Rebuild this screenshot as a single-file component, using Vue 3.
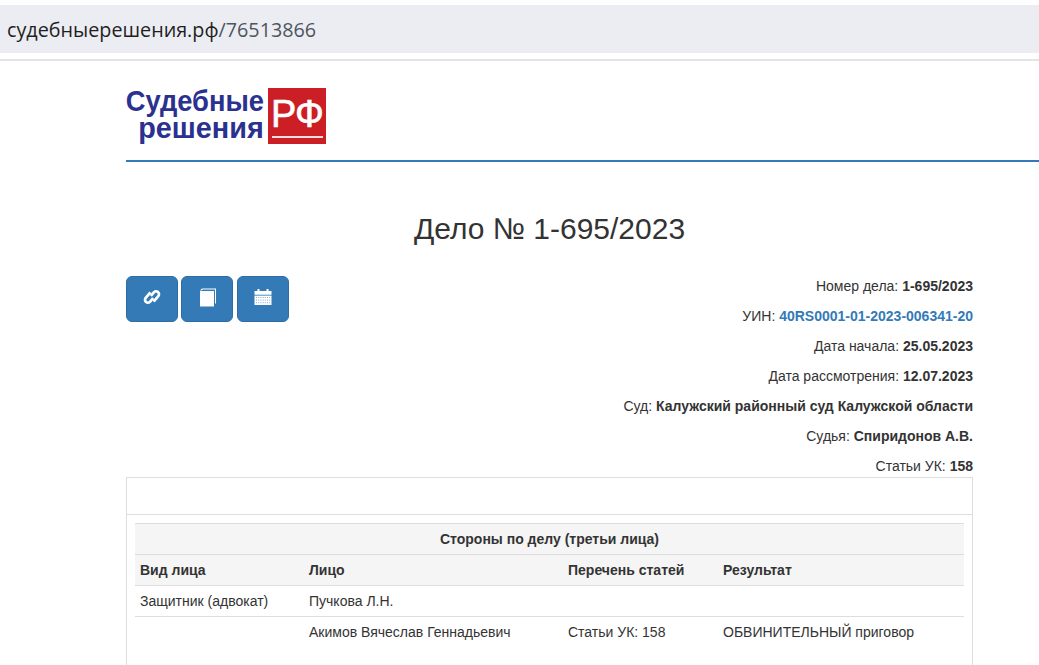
<template>
  <div class="page">
    <div class="address-bar">
      <span class="host">судебныерешения.рф</span><span class="path">/76513866</span>
    </div>
    <div class="bar-line"></div>

    <main class="content">
      <header class="site-header">
        <a href="#" class="logo" title="Судебные решения">
          <span class="logo-text">
            <span class="logo-top">Судебные</span>
            <span class="logo-bottom">решения</span>
          </span>
          <span class="logo-mark">
            <span class="logo-letters">РФ</span>
            <span class="logo-rule"></span>
          </span>
        </a>
      </header>

      <div class="wrap">
        <h1 class="title">Дело № 1-695/2023</h1>

        <div class="summary">
          <div class="actions">
            <button class="btn" type="button" aria-label="Ссылка">
              <svg width="20" height="20" viewBox="0 0 20 20">
                <g transform="rotate(-50 10 10)" fill="none" stroke="#fff" stroke-width="2.7">
                  <path d="M12.5 5.8 H5.2 a2.9 2.9 0 0 0 0 5.8 H10" />
                  <path d="M10 8.4 H14.8 a2.9 2.9 0 0 1 0 5.8 H7.5" />
                </g>
              </svg>
            </button>
            <button class="btn" type="button" aria-label="Документы">
              <svg class="book" width="18" height="19" viewBox="0 0 18 19">
                <path d="M1 2.5 L3 0.5 H17 V15.5 H16 V1.5 H3.5 L2.5 2.5 Z" fill="#fff" />
                <path d="M1 3 H15 V18.5 H1 Z" fill="#fff" />
              </svg>
            </button>
            <button class="btn" type="button" aria-label="Календарь">
              <svg width="18" height="18" viewBox="0 0 18 18">
                <path d="M0.5 3 H3.5 V1 H5.5 V3 H12.5 V1 H14.5 V3 H17.5 V6.8 H0.5 Z" fill="#fff" />
                <rect x="0.5" y="7.6" width="17" height="9.4" fill="#fff" />
                <g fill="#8aa9d0">
                  <rect v-for="dot in dots" :key="dot.id" :x="dot.x" :y="dot.y" width="1" height="1" />
                </g>
              </svg>
            </button>
          </div>

          <div class="info">
            <div v-for="row in info" :key="row.label" class="info-row">
              {{ row.label }}: <a v-if="row.link" href="#" class="info-link">{{ row.value }}</a
              ><b v-else>{{ row.value }}</b>
            </div>
          </div>
        </div>

        <section class="panel">
          <div class="panel-heading"></div>
          <div class="panel-body">
            <table class="parties">
              <colgroup>
                <col class="col-kind" />
                <col class="col-person" />
                <col class="col-articles" />
                <col />
              </colgroup>
              <thead>
                <tr>
                  <th colspan="4" class="caption">Стороны по делу (третьи лица)</th>
                </tr>
                <tr>
                  <th>Вид лица</th>
                  <th>Лицо</th>
                  <th>Перечень статей</th>
                  <th>Результат</th>
                </tr>
              </thead>
              <tbody>
                <tr v-for="party in parties" :key="party.person">
                  <td>{{ party.kind }}</td>
                  <td>{{ party.person }}</td>
                  <td>{{ party.articles }}</td>
                  <td>{{ party.result }}</td>
                </tr>
              </tbody>
            </table>
          </div>
        </section>
      </div>
    </main>
  </div>
</template>

<script setup>
const info = [
  { label: "Номер дела", value: "1-695/2023" },
  { label: "УИН", value: "40RS0001-01-2023-006341-20", link: true },
  { label: "Дата начала", value: "25.05.2023" },
  { label: "Дата рассмотрения", value: "12.07.2023" },
  { label: "Суд", value: "Калужский районный суд Калужской области" },
  { label: "Судья", value: "Спиридонов А.В." },
  { label: "Статьи УК", value: "158" },
];

const parties = [
  { kind: "Защитник (адвокат)", person: "Пучкова Л.Н.", articles: "", result: "" },
  {
    kind: "",
    person: "Акимов Вячеслав Геннадьевич",
    articles: "Статьи УК: 158",
    result: "ОБВИНИТЕЛЬНЫЙ приговор",
  },
];

// calendar grid dots
const dots = [];
for (let r = 0; r < 3; r++) {
  for (let c = 0; c < 7; c++) {
    dots.push({ id: `${r}-${c}`, x: 2 + c * 2.2, y: 9 + r * 2.6 });
  }
}
</script>

<style>
html,
body {
  margin: 0;
  background: #fff;
  overflow: hidden;
}
</style>

<style scoped>
.page {
  height: 665px;
  overflow: hidden;
  padding-top: 5px;
  box-sizing: border-box;
  font-family: "Liberation Sans", Arial, sans-serif;
  font-size: 14px;
  color: #333;
}

.address-bar {
  height: 48px;
  line-height: 49px;
  padding-left: 7px;
  background: #ecedf2;
  font-family: "Open Sans", "Noto Sans", sans-serif;
  font-size: 19.75px;
}
.host {
  color: #1f1f1f;
}
.path {
  color: #4f5560;
}

.bar-line {
  height: 2px;
  margin-top: 6px;
  background: #e3e3e8;
}

.content {
  padding-left: 126px;
}

.site-header {
  padding: 27px 0 16px;
  border-bottom: 2px solid #337ab7;
}

.logo {
  display: flex;
  align-items: stretch;
  width: 200px;
  height: 56px;
  text-decoration: none;
}
.logo-text {
  display: flex;
  flex-direction: column;
  align-items: flex-end;
  width: 138px;
  margin: -1px 4px 0 0;
  color: #2b3190;
  font-size: 30px;
  font-weight: 700;
  line-height: 27px;
  white-space: nowrap;
}
.logo-top,
.logo-bottom {
  transform-origin: right center;
}
.logo-top {
  transform: scaleX(0.91);
}
.logo-bottom {
  transform: scaleX(0.96);
}
.logo-mark {
  display: flex;
  flex-direction: column;
  align-items: center;
  width: 58px;
  padding-top: 7px;
  box-sizing: border-box;
  background: #cb1f25;
  color: #fff;
}
.logo-letters {
  font-size: 38px;
  line-height: 38px;
  letter-spacing: -1px;
  -webkit-text-stroke: 0.6px #fff;
}
.logo-rule {
  width: 51px;
  height: 2px;
  margin-top: 3px;
  background: #f4dcdc;
}

.wrap {
  width: 847px;
}

.title {
  margin: 50px 0 31px;
  font-size: 30px;
  font-weight: 400;
  line-height: 33px;
  text-align: center;
}

.summary {
  display: flex;
  justify-content: space-between;
  align-items: flex-start;
}

.actions {
  display: flex;
  gap: 3px;
}
.btn {
  display: flex;
  align-items: center;
  justify-content: center;
  width: 52px;
  height: 46px;
  padding: 0 0 4px;
  background: #337ab7;
  border: 1px solid #2e6da4;
  border-radius: 6px;
}
.btn + .btn + .btn {
  margin-left: 1px;
}
.book {
  margin-left: 2px;
}

.info {
  display: flex;
  flex-direction: column;
  gap: 10px;
  text-align: right;
}
.info-row {
  line-height: 20px;
}
.info-link {
  color: #337ab7;
  font-weight: 700;
  text-decoration: none;
}

.panel {
  margin-top: 1px;
  border: 1px solid #ddd;
  border-bottom: none;
}
.panel-heading {
  height: 36px;
  border-bottom: 1px solid #ddd;
}
.panel-body {
  padding: 8px 8px 40px;
}

.parties {
  width: 100%;
  border-collapse: collapse;
  table-layout: fixed;
}
.col-kind {
  width: 169px;
}
.col-person {
  width: 259px;
}
.col-articles {
  width: 155px;
}
.parties th,
.parties td {
  height: 31px;
  padding: 5px;
  box-sizing: border-box;
  border-top: 1px solid #ddd;
  line-height: 20px;
  text-align: left;
}
.parties th {
  background: #f5f5f5;
  font-weight: 700;
}
.parties thead tr:last-child th {
  border-bottom: 1px solid #ddd;
}
.parties th.caption {
  text-align: center;
}
</style>
